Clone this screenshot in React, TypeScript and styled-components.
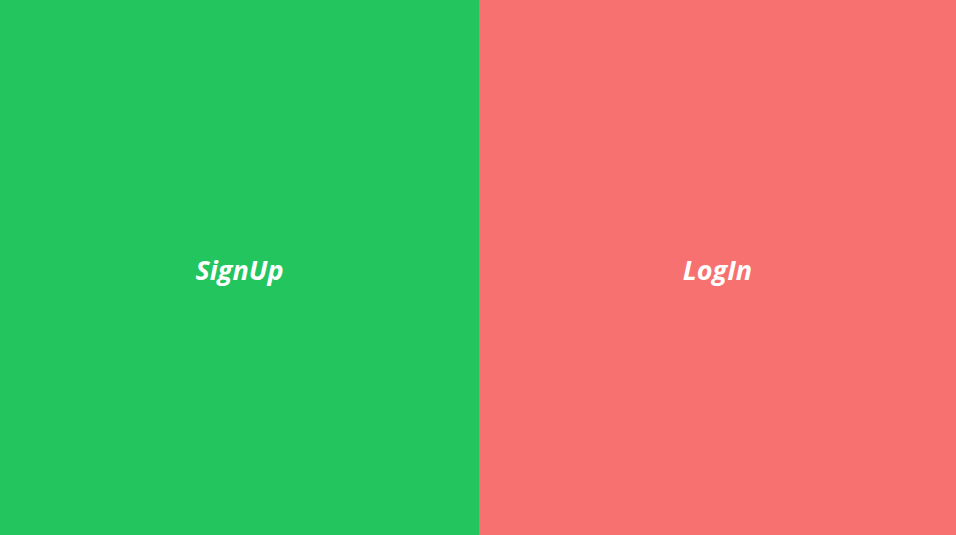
import styled, { createGlobalStyle } from "styled-components";

const GlobalStyle = createGlobalStyle`
  html, body {
    margin: 0;
    padding: 0;
    height: 100%;
  }
  #root {
    height: 100%;
  }
`;

const Wrapper = styled.div`
  display: grid;
  grid-template-columns: 479px 1fr;
  height: 100vh;
  font-family: "Open Sans", "Noto Sans", sans-serif;
`;

const Panel = styled.div<{ $bg: string }>`
  display: flex;
  align-items: center;
  justify-content: center;
  background-color: ${(props) => props.$bg};
  color: white;
  font-size: 27px;
  font-weight: 700;
  font-style: italic;
  padding-top: 4px;
  cursor: pointer;
`;

function App() {
  return (
    <>
      <GlobalStyle />
      <Wrapper>
        <Panel $bg="#22c55e">SignUp</Panel>
        <Panel $bg="#f87171">LogIn</Panel>
      </Wrapper>
    </>
  );
}

export default App;
